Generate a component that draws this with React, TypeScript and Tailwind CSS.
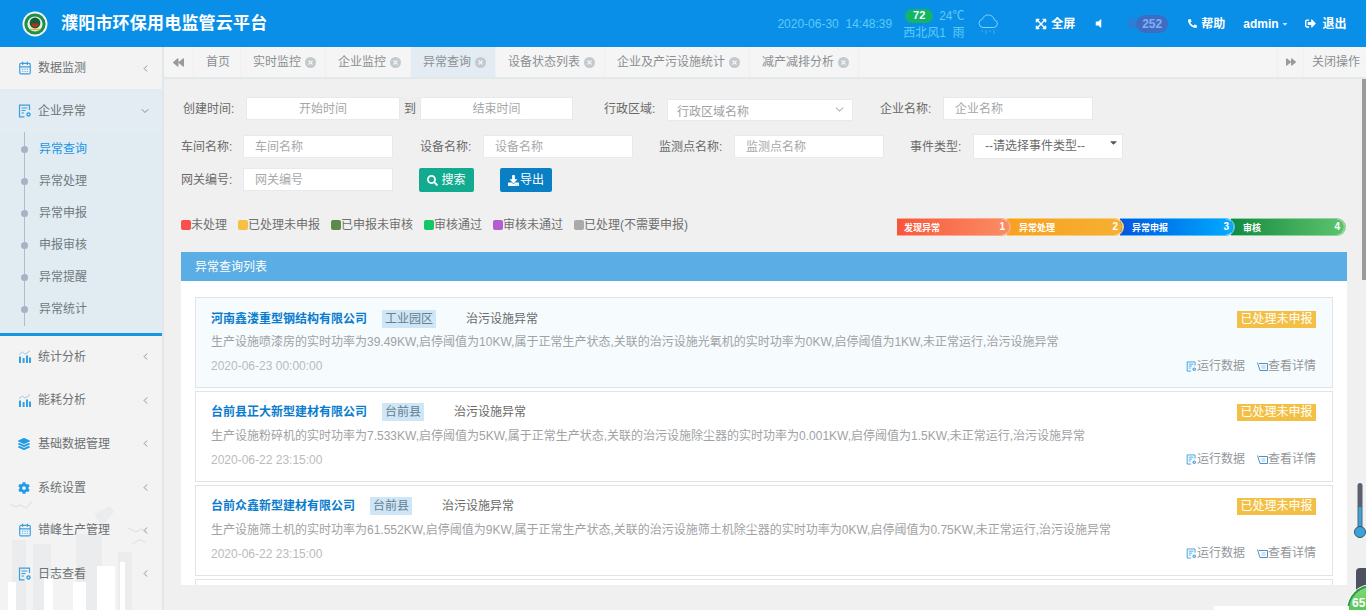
import React from 'react';
import { CalendarDays, ChevronDown, ChevronLeft } from 'lucide-react';
import {
  FaBackward,
  FaBell,
  FaCaretDown,
  FaCog,
  FaDownload,
  FaExpandArrowsAlt,
  FaForward,
  FaLayerGroup,
  FaPhone,
  FaSearch,
  FaSignOutAlt,
  FaVolumeOff,
} from 'react-icons/fa';

function DocIcon({ size = 14 }: { size?: number }) {
  return (
    <svg width={size} height={size} viewBox="0 0 14 14" fill="none" className="shrink-0">
      <path d="M11.5 6V1.2H1.5v11.6h5" stroke="#3a9fe0" strokeWidth="1.2" />
      <path d="M3.5 4h6M3.5 6.5h4M3.5 9h2.5" stroke="#3a9fe0" strokeWidth="1.1" />
      <circle cx="10.5" cy="10.5" r="2.2" fill="#3a9fe0" />
      <circle cx="10.5" cy="10.5" r="0.8" fill="#fff" />
    </svg>
  );
}

function ChartIcon() {
  return (
    <svg width="13" height="13" viewBox="0 0 13 13" className="shrink-0">
      <path d="M1 6.5h2V13H1zM4.6 8h2v5h-2zM8 5.5h2V13H8zM11 7.5h2V13h-2z" fill="#3a9fe0" />
      <path d="M1 4.5 4.5 2 7 4.2 12 0.8" stroke="#8fc6ea" strokeWidth="0.9" fill="none" />
    </svg>
  );
}

function DetailIcon() {
  return (
    <svg width="11" height="11" viewBox="0 0 11 11" fill="none" className="shrink-0">
      <path d="M0.5 1.5 3 9.5h7.5V2.5H2" stroke="#4f8fc8" strokeWidth="1" />
      <path d="M4.5 5h4M4.5 7h4" stroke="#9cc3e3" strokeWidth="1" />
    </svg>
  );
}

function TabClose() {
  return (
    <svg width="11" height="11" viewBox="0 0 11 11" className="shrink-0">
      <circle cx="5.5" cy="5.5" r="5.5" fill="#c4c9cc" />
      <path d="M3.5 3.5l4 4M7.5 3.5l-4 4" stroke="#f2f4f5" strokeWidth="1.3" />
    </svg>
  );
}

function RainCloud() {
  return (
    <svg width="23" height="23" viewBox="0 0 23 23" fill="none" className="ml-[10px] shrink-0">
      <path
        d="M6 15.5a4.2 4.2 0 0 1-.6-8.3 6.2 6.2 0 0 1 11.9.6 3.9 3.9 0 0 1-.6 7.7z"
        stroke="#7fd3f8"
        strokeWidth="1"
      />
      <path d="M5 18.5v1.5M9 18.5v3M13 18.5v1.5M17 18.5v3" stroke="#7fd3f8" strokeWidth="0.9" strokeDasharray="1 1" />
    </svg>
  );
}

function Logo() {
  return (
    <svg width="26" height="26" viewBox="0 0 26 26">
      <circle cx="13" cy="13" r="12.5" fill="#f4f7ee" />
      <circle cx="13" cy="13" r="10.6" fill="#1f8f4e" />
      <circle cx="13" cy="13" r="7.6" fill="#e9f1dc" />
      <circle cx="13" cy="12" r="5.4" fill="#145c3a" />
      <path d="M9.4 12.6a3.6 3.6 0 0 0 7.2 0z" fill="#b5301f" />
      <path d="M8 18.5h10" stroke="#d9b53a" strokeWidth="1.4" />
    </svg>
  );
}

function SideItem({ icon, label, arrow = 'left', className = '' }: {
  icon: React.ReactNode;
  label: string;
  arrow?: 'left' | 'down';
  className?: string;
}) {
  return (
    <div className={`relative flex items-center pl-[18px] pr-[11px] text-xs text-[#6d7173] ${className}`}>
      <span className="flex w-[20px] shrink-0 items-center">{icon}</span>
      <span>{label}</span>
      {arrow === 'left' ? (
        <ChevronLeft size={11} strokeWidth={2} className="ml-auto text-[#8a8a8a]" />
      ) : (
        <ChevronDown size={12} strokeWidth={2} className="ml-auto text-[#8a8a8a]" />
      )}
    </div>
  );
}

const subMenu = ['异常查询', '异常处理', '异常申报', '申报审核', '异常提醒', '异常统计'];

function Skyline() {
  return (
    <svg width="164" height="112" viewBox="0 0 164 112" className="absolute bottom-0 left-0">
      <g fill="#ebeced">
        <rect x="12" y="42" width="14" height="70" />
        <rect x="33" y="46" width="18" height="66" />
        <rect x="76" y="36" width="26" height="76" />
        <rect x="118" y="54" width="14" height="58" />
        <path d="M94 16l16-8 4 6-12 14z" />
      </g>
      <path d="M10 6l6 3 4-2 6 3 6-6M128 30l8 4 5-3 6 3M132 46l8-4 6 2" stroke="#e2e3e4" strokeWidth="1.2" fill="none" />
      <g fill="#fff">
        <rect x="8" y="84" width="8" height="28" />
        <rect x="44" y="78" width="9" height="34" />
        <rect x="73" y="84" width="13" height="28" />
        <rect x="97" y="68" width="18" height="44" />
        <rect x="120" y="64" width="5" height="48" />
      </g>
    </svg>
  );
}

function Sidebar() {
  return (
    <aside className="relative w-[164px] shrink-0 overflow-hidden border-r-[2px] border-[#e3e6e8] bg-[#f3f3f3]">
      <Skyline />
      <div className="relative">
        <SideItem className="h-[42px]" icon={<CalendarDays size={14} className="text-[#3a9fe0]" />} label="数据监测" />
        <SideItem className="h-[43px] bg-[#e3ecf3]" arrow="down" icon={<DocIcon />} label="企业异常" />
        <div className="relative h-[204px] border-b-[3px] border-[#1a96e0] bg-[#e1ebf2] pb-[9px]">
          <div className="absolute left-[24px] top-0 h-[194px] w-px bg-[#b4b9cc]" />
          {subMenu.map((m, i) => (
            <div key={m} className={`relative flex h-[32px] items-center pl-[39px] pt-[2px] text-xs ${i === 0 ? 'text-[#1a96e8]' : 'text-[#707a80]'}`}>
              <span className="absolute left-[21px] h-[7px] w-[7px] rounded-full bg-[#abb1c6]" />
              {m}
            </div>
          ))}
        </div>
        <SideItem className="h-[43.6px] pb-[2px]" icon={<ChartIcon />} label="统计分析" />
        <SideItem className="h-[43.6px] pb-[2px]" icon={<ChartIcon />} label="能耗分析" />
        <SideItem className="h-[43.6px] pb-[2px]" icon={<FaLayerGroup size={12} className="text-[#1f9be6]" />} label="基础数据管理" />
        <SideItem className="h-[43.6px] pb-[2px]" icon={<FaCog size={12} className="text-[#1f9be6]" />} label="系统设置" />
        <SideItem className="h-[43.6px] pb-1" icon={<CalendarDays size={14} className="text-[#3a9fe0]" />} label="错峰生产管理" />
        <SideItem className="h-[43.6px] pb-1" icon={<DocIcon />} label="日志查看" />
      </div>
    </aside>
  );
}

function Header() {
  return (
    <header className="flex h-[47px] shrink-0 items-center bg-[#0a8fe9] text-white">
      <div className="ml-[22px]"><Logo /></div>
      <h1 className="ml-[13px] text-[17px] font-bold tracking-[0.2px]">濮阳市环保用电监管云平台</h1>
      <span className="ml-[510px] whitespace-pre text-xs text-[#5ccbf6]">2020-06-30  14:48:39</span>
      <div className="ml-[11px] w-[64px] text-[#5ccbf6]">
        <div className="flex h-[18px] items-center">
          <span className="ml-[2px] flex h-[14px] w-[28px] items-center justify-center rounded-full bg-[#12b465] text-[11px] font-bold text-white">72</span>
          <span className="ml-[6px] text-xs">24℃</span>
        </div>
        <div className="whitespace-pre text-xs leading-[16px]">西北风1  雨</div>
      </div>
      <RainCloud />
      <FaExpandArrowsAlt size={12} className="ml-[35px]" />
      <span className="ml-[4px] text-xs font-bold">全屏</span>
      <FaVolumeOff size={11} className="ml-[18px]" />
      <div className="relative ml-[22px] flex items-center">
        <FaBell size={13} className="text-[#2b80d6]" />
        <span className="-ml-[3px] flex h-[18px] w-[32px] items-center justify-center rounded-full bg-[#3d6cc2] text-xs font-bold text-[#82aef0]">252</span>
      </div>
      <FaPhone size={9} className="ml-[20px] -scale-x-100" />
      <span className="ml-[4px] text-xs font-bold">帮助</span>
      <span className="ml-[18px] text-xs font-bold">admin</span>
      <FaCaretDown size={8} className="ml-[2px] text-[#bfe3fb]" />
      <FaSignOutAlt size={11} className="ml-[16px]" />
      <span className="ml-[7px] text-xs font-bold">退出</span>
    </header>
  );
}

const tabs = ['实时监控', '企业监控', '异常查询', '设备状态列表', '企业及产污设施统计', '减产减排分析'];

function TabBar() {
  return (
    <div className="flex h-[32px] shrink-0 items-stretch border-b-2 border-[#e3e8ea] bg-[#f5f5f5] text-xs text-[#8b8f92]">
      <div className="flex w-[30px] items-center justify-center border-r border-[#f0f0f0]">
        <FaBackward size={11} className="text-[#9a9a9a]" />
      </div>
      <div className="flex w-[47px] items-center justify-center border-r border-[#f0f0f0] pl-[2px]">首页</div>
      {tabs.map(t => (
        <div
          key={t}
          className={`flex items-center gap-[4px] border-r border-[#f0f0f0] pl-3 pr-[9px] ${t === '异常查询' ? 'bg-[#e3ecf3]' : ''}`}
        >
          {t}
          <TabClose />
        </div>
      ))}
      <div className="ml-auto flex w-[27px] items-center justify-center border-x border-[#f0f0f0]">
        <FaForward size={10} className="text-[#9a9a9a]" />
      </div>
      <div className="flex w-[62px] items-center pl-[8px]">关闭操作</div>
    </div>
  );
}

const inputCls =
  'h-full border border-[#e8e9ea] bg-white text-xs outline-none placeholder:text-[#a6a8aa]';

function Field({ label, placeholder, labelW, ml = 0 }: { label: string; placeholder: string; labelW: number; ml?: number }) {
  return (
    <div className="flex h-full items-center" style={{ marginLeft: ml }}>
      <span className="text-xs text-[#6a6a6a]" style={{ width: labelW }}>{label}</span>
      <input placeholder={placeholder} className={`${inputCls} w-[150px] pl-[11px]`} />
    </div>
  );
}

function Filters() {
  return (
    <div className="shrink-0 pl-[17px] pt-[18px]">
      <div className="flex h-[23px] items-center pl-[2px]">
        <span className="w-[63px] text-xs text-[#6a6a6a]">创建时间:</span>
        <input placeholder="开始时间" className={`${inputCls} w-[154px] text-center`} />
        <span className="flex h-full w-[20px] items-center justify-center bg-[#eee] text-xs text-[#6a6a6a]">到</span>
        <input placeholder="结束时间" className={`${inputCls} w-[153px] text-center`} />
        <span className="ml-[31px] w-[63px] text-xs text-[#6a6a6a]">行政区域:</span>
        <div className="flex h-[22px] w-[186px] translate-y-[1px] items-center justify-between border border-[#e8e9ea] bg-white pl-[9px] pr-[6px] text-xs text-[#a0a2a4]">
          <span className="translate-y-[2px]">行政区域名称</span>
          <ChevronDown size={13} className="text-[#b5b5b5]" />
        </div>
        <Field label="企业名称:" placeholder="企业名称" labelW={63} ml={27} />
      </div>
      <div className="mt-[15px] flex h-[23px] items-center">
        <Field label="车间名称:" placeholder="车间名称" labelW={62} />
        <Field label="设备名称:" placeholder="设备名称" labelW={63} ml={27} />
        <Field label="监测点名称:" placeholder="监测点名称" labelW={75} ml={26} />
        <span className="ml-[26px] w-[63px] text-xs text-[#6a6a6a]">事件类型:</span>
        <div className="relative h-[25px] w-[150px] -translate-y-px">
          <select className="h-full w-full appearance-none border border-[#e8e9ea] bg-white pl-[11px] text-xs text-[#6a6a6a] outline-none">
            <option>--请选择事件类型--</option>
          </select>
          <FaCaretDown size={11} className="absolute right-[4px] top-[4px] text-[#555]" />
        </div>
      </div>
      <div className="mt-[10px] flex h-[23px] items-center">
        <Field label="网关编号:" placeholder="网关编号" labelW={62} />
        <button type="button" className="ml-[26px] flex h-[24px] w-[55px] items-center justify-center gap-[3px] rounded-[2px] bg-[#13ab8f] pt-px text-xs text-white">
          <FaSearch size={11} />搜索
        </button>
        <button type="button" className="ml-[26px] flex h-[24px] w-[52px] items-center justify-center gap-px rounded-[2px] bg-[#0a7fc4] pt-px text-xs text-white">
          <FaDownload size={11} />导出
        </button>
      </div>
    </div>
  );
}

const legend = [
  ['未处理', 'bg-[#f9504e]', 'mr-[11px]'],
  ['已处理未申报', 'bg-[#f8c043]', 'mr-[11px]'],
  ['已申报未审核', 'bg-[#5c8a4a]', 'mr-[11px]'],
  ['审核通过', 'bg-[#12c765]', 'mr-[11px]'],
  ['审核未通过', 'bg-[#b25ed0]', 'mr-[11px]'],
  ['已处理(不需要申报)', 'bg-[#a9a9a9]', ''],
];

const steps = [
  ['发现异常', '1', 'from-[#f9543c] to-[#f98d62]', 'border-[#f9a98f]', 'z-40', 'w-[114px]'],
  ['异常处理', '2', 'from-[#f9a11f] to-[#f5b033]', 'border-[#f8cd7a]', 'z-30', 'w-[117px]'],
  ['异常申报', '3', 'from-[#0a55df] to-[#0aabff]', 'border-[#56c3f8]', 'z-20', 'w-[115px]'],
  ['审核', '4', 'from-[#0a8a42] to-[#5cc46e]', 'border-[#8ed39a]', 'z-10', 'w-[115px]'],
];

function LegendRow() {
  return (
    <div className="mt-[27px] flex h-[18px] shrink-0 items-center pl-[17px] pr-[20px]">
      <div className="flex -translate-y-[2px] items-center text-xs text-[#6f6f6f]">
        {legend.map(([text, color, mr]) => (
          <span key={text} className={`flex items-center ${mr}`}>
            <i className={`h-[10px] w-[10px] rounded-[2px] ${color}`} />
            {text}
          </span>
        ))}
      </div>
      <div className="ml-auto flex">
        {steps.map(([text, n, grad, border, z, w], i) => (
          <div
            key={text}
            className={`relative flex h-[18px] items-center rounded-r-full border-b border-r-2 border-t ${border} ${z} ${w} ${i > 0 ? '-ml-[4px]' : ''}`}
          >
            <div className={`flex h-[16px] w-full items-center rounded-r-full bg-gradient-to-r pr-[4px] text-[9px] font-bold leading-none text-white ${grad} ${i > 0 ? 'pl-[12px]' : 'pl-[7px]'}`}>
              <span className="pt-[2px]">{text}</span>
              <span className="ml-auto text-[10px]">{n}</span>
            </div>
          </div>
        ))}
      </div>
    </div>
  );
}

const records = [
  {
    name: '河南鑫溇重型钢结构有限公司',
    area: '工业园区',
    desc: '生产设施喷漆房的实时功率为39.49KW,启停阈值为10KW,属于正常生产状态,关联的治污设施光氧机的实时功率为0KW,启停阈值为1KW,未正常运行,治污设施异常',
    time: '2020-06-23 00:00:00',
  },
  {
    name: '台前县正大新型建材有限公司',
    area: '台前县',
    desc: '生产设施粉碎机的实时功率为7.533KW,启停阈值为5KW,属于正常生产状态,关联的治污设施除尘器的实时功率为0.001KW,启停阈值为1.5KW,未正常运行,治污设施异常',
    time: '2020-06-22 23:15:00',
  },
  {
    name: '台前众鑫新型建材有限公司',
    area: '台前县',
    desc: '生产设施筛土机的实时功率为61.552KW,启停阈值为9KW,属于正常生产状态,关联的治污设施筛土机除尘器的实时功率为0KW,启停阈值为0.75KW,未正常运行,治污设施异常',
    time: '2020-06-22 23:15:00',
  },
];

function RecordCard({ rec, active }: { rec: (typeof records)[number]; active: boolean }) {
  return (
    <div className={`flex h-[91px] shrink-0 flex-col border border-[#dfe4e6] pl-[15px] pr-[16px] ${active ? 'bg-[#f6fbfe] pt-[12px]' : 'bg-white pt-[11px]'}`}>
      <div className="flex h-[18px] items-center text-xs">
        <span className="font-bold text-[#0a7ccd]">{rec.name}</span>
        <span className="ml-[15px] bg-[#cfe6f7] px-[3px] leading-[18px] text-[#64808f]">{rec.area}</span>
        <span className="ml-[30px] text-[#6a6a6a]">治污设施异常</span>
        <span className="ml-auto flex h-[17px] w-[79px] items-center justify-center bg-[#f3bf45] text-xs text-white">已处理未申报</span>
      </div>
      <p className={`whitespace-nowrap text-xs leading-[18px] text-[#a0a2a4] ${active ? 'mt-[5px]' : 'mt-[6px]'}`}>{rec.desc}</p>
      <div className="mt-[7px] flex items-center text-xs text-[#b9bbbd]">
        <span>{rec.time}</span>
        <span className={`ml-auto flex items-center text-[#93979a] ${active ? '' : '-translate-y-px'}`}>
          <DocIcon size={11} />运行数据
          <span className="ml-[12px]"><DetailIcon /></span>查看详情
        </span>
      </div>
    </div>
  );
}

function ListPanel() {
  return (
    <div className="ml-[17px] mr-[19px] mt-[16px] flex h-[333px] shrink-0 flex-col overflow-hidden">
      <div className="flex h-[29px] shrink-0 items-center bg-[#5aade5] pl-[14px] text-xs text-white">异常查询列表</div>
      <div className="flex min-h-0 flex-1 flex-col gap-[3px] overflow-hidden bg-white px-[14px] pt-[16px]">
        {records.map((r, i) => (
          <RecordCard key={r.name} rec={r} active={i === 0} />
        ))}
        <div className="h-[40px] shrink-0 border border-[#dfe4e6] bg-white" />
      </div>
    </div>
  );
}

function SideWidgets() {
  return (
    <>
      <div className="absolute right-0 top-[79px] h-[201px] w-[4px] bg-[#9a9a9a]" />
      <svg width="14" height="60" viewBox="0 0 14 60" className="absolute right-[-1px] top-[482px]">
        <rect x="4.5" y="1" width="5" height="50" rx="2.5" fill="#5b6070" />
        <rect x="5.5" y="25" width="3" height="26" fill="#3ba3d8" />
        <circle cx="7" cy="50" r="5.5" fill="#3ba3d8" stroke="#3d5568" strokeWidth="1" />
      </svg>
      <div className="absolute right-0 top-[568px] h-[24px] w-[10px] rounded-tl-sm bg-[#4d5160]" />
      <div className="absolute left-[1347px] top-[585px] h-[50px] w-[50px] rounded-full border-2 border-[#2f9a4a] bg-gradient-to-b from-[#7fdc6e] to-[#2fae4a] pl-[3px] pt-[10px] text-xs font-bold leading-none text-white outline outline-1 outline-white">
        65
      </div>
      <div className="absolute left-[1214px] top-[606px] h-[4px] w-[135px] bg-white" />
    </>
  );
}

export default function App() {
  return (
    <div className="relative flex h-[610px] w-[1366px] flex-col overflow-hidden bg-[#f1f0f0] font-['Liberation_Sans','Noto_Sans_CJK_SC',sans-serif]">
      <Header />
      <div className="flex min-h-0 flex-1">
        <Sidebar />
        <main className="flex min-w-0 flex-1 flex-col">
          <TabBar />
          <Filters />
          <LegendRow />
          <ListPanel />
        </main>
      </div>
      <SideWidgets />
    </div>
  );
}
